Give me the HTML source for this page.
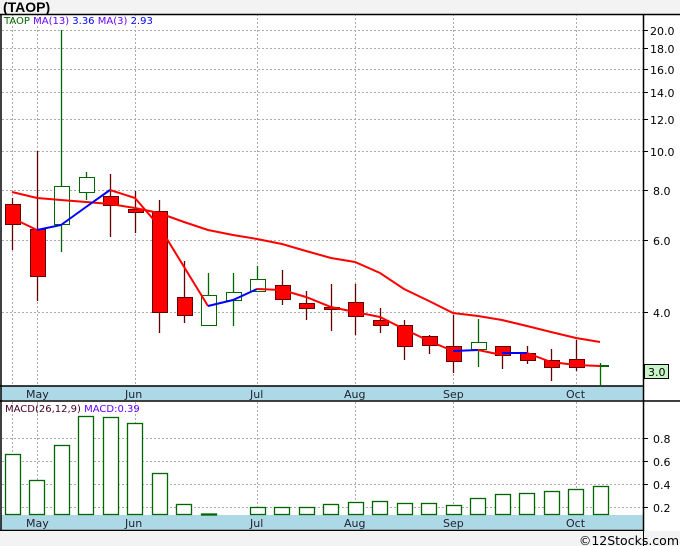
<!DOCTYPE html><html><head><style>
body{margin:0;background:#f3f3f3;width:680px;height:546px;overflow:hidden}
svg{display:block;font-family:"DejaVu Sans","Liberation Sans",sans-serif}
</style></head><body>
<svg width="680" height="546" viewBox="0 0 680 546">
<rect x="0" y="0" width="680" height="546" fill="#f3f3f3"/>
<text x="3" y="12" font-size="14" font-weight="bold" font-family="Liberation Sans,sans-serif">(TAOP)</text>
<rect x="0" y="14" width="680" height="517" fill="#fff"/>
<g stroke="#aaa" stroke-dasharray="2,2" stroke-width="1">
<line x1="2" y1="30.5" x2="643" y2="30.5"/><line x1="2" y1="48.5" x2="643" y2="48.5"/><line x1="2" y1="69.5" x2="643" y2="69.5"/><line x1="2" y1="92.5" x2="643" y2="92.5"/><line x1="2" y1="119.5" x2="643" y2="119.5"/><line x1="2" y1="151.5" x2="643" y2="151.5"/><line x1="2" y1="190.5" x2="643" y2="190.5"/><line x1="2" y1="240.5" x2="643" y2="240.5"/><line x1="2" y1="312.5" x2="643" y2="312.5"/>
<line x1="2" y1="438.5" x2="643" y2="438.5"/><line x1="2" y1="461.5" x2="643" y2="461.5"/><line x1="2" y1="484.5" x2="643" y2="484.5"/><line x1="2" y1="507.5" x2="643" y2="507.5"/>
<line x1="12.5" y1="14" x2="12.5" y2="530"/><line x1="37.5" y1="14" x2="37.5" y2="530"/><line x1="135.5" y1="14" x2="135.5" y2="530"/><line x1="257.5" y1="14" x2="257.5" y2="530"/><line x1="355.5" y1="14" x2="355.5" y2="530"/><line x1="453.5" y1="14" x2="453.5" y2="530"/><line x1="576.5" y1="14" x2="576.5" y2="530"/>
</g>
<rect x="1" y="386" width="642" height="14" fill="#add8e6"/>
<rect x="1" y="515" width="642" height="15" fill="#add8e6"/>
<g font-size="11" fill="#223">
<text x="26" y="398">May</text><text x="125" y="398">Jun</text><text x="250" y="398">Jul</text><text x="344" y="398">Aug</text><text x="443" y="398">Sep</text><text x="566" y="398">Oct</text>
<text x="26" y="527">May</text><text x="125" y="527">Jun</text><text x="250" y="527">Jul</text><text x="344" y="527">Aug</text><text x="443" y="527">Sep</text><text x="566" y="527">Oct</text>
</g>
<g stroke="#000" stroke-width="1.5" fill="none">
<line x1="0" y1="14.5" x2="680" y2="14.5"/><line x1="1" y1="14" x2="1" y2="531"/><line x1="643.5" y1="14" x2="643.5" y2="546"/>
<line x1="0" y1="401" x2="680" y2="401"/><line x1="0" y1="530.5" x2="643" y2="530.5"/><line x1="0" y1="386" x2="643" y2="386"/>
</g>
<g stroke="#000"><line x1="643" y1="30.5" x2="648" y2="30.5"/><line x1="643" y1="48.5" x2="648" y2="48.5"/><line x1="643" y1="69.5" x2="648" y2="69.5"/><line x1="643" y1="92.5" x2="648" y2="92.5"/><line x1="643" y1="119.5" x2="648" y2="119.5"/><line x1="643" y1="151.5" x2="648" y2="151.5"/><line x1="643" y1="190.5" x2="648" y2="190.5"/><line x1="643" y1="240.5" x2="648" y2="240.5"/><line x1="643" y1="312.5" x2="648" y2="312.5"/><line x1="643" y1="438.5" x2="648" y2="438.5"/><line x1="643" y1="461.5" x2="648" y2="461.5"/><line x1="643" y1="484.5" x2="648" y2="484.5"/><line x1="643" y1="507.5" x2="648" y2="507.5"/></g>
<g font-size="11" fill="#000">
<text x="650" y="35">20.0</text><text x="650" y="53">18.0</text><text x="650" y="74">16.0</text><text x="650" y="97">14.0</text><text x="650" y="124">12.0</text><text x="650" y="156">10.0</text><text x="653" y="195">8.0</text><text x="653" y="245">6.0</text><text x="653" y="317">4.0</text>
<text x="653" y="443">0.8</text><text x="653" y="466">0.6</text><text x="653" y="489">0.4</text><text x="653" y="512">0.2</text>
</g>
<rect x="644.5" y="364.5" width="24" height="14" fill="#c8f5c8" stroke="#000"/>
<text x="648" y="376" font-size="11">3.0</text>
<text x="4" y="24" font-size="10"><tspan fill="#060">TAOP</tspan> <tspan fill="#60f">MA(13)</tspan> <tspan fill="#00f">3.36</tspan> <tspan fill="#60f">MA(3)</tspan> <tspan fill="#00f">2.93</tspan></text>
<text x="5" y="412" font-size="10"><tspan fill="#402">MACD(26,12,9)</tspan>  <tspan fill="#60f">MACD:0.39</tspan></text>
<g stroke="#600" stroke-width="1.3">
<line x1="12.5" y1="198" x2="12.5" y2="250"/><line x1="37.5" y1="151" x2="37.5" y2="301"/><line x1="110.5" y1="174" x2="110.5" y2="237"/><line x1="135.5" y1="191" x2="135.5" y2="233"/><line x1="159.5" y1="200" x2="159.5" y2="333"/><line x1="184.5" y1="261" x2="184.5" y2="323"/><line x1="282.5" y1="270" x2="282.5" y2="305"/><line x1="306.5" y1="291" x2="306.5" y2="320"/><line x1="331.5" y1="284" x2="331.5" y2="331"/><line x1="355.5" y1="284" x2="355.5" y2="335"/><line x1="380.5" y1="308" x2="380.5" y2="333"/><line x1="404.5" y1="320" x2="404.5" y2="360"/><line x1="429.5" y1="335" x2="429.5" y2="354"/><line x1="453.5" y1="315" x2="453.5" y2="373"/><line x1="502.5" y1="346" x2="502.5" y2="369"/><line x1="527.5" y1="346" x2="527.5" y2="364"/><line x1="551.5" y1="349" x2="551.5" y2="381"/><line x1="576.5" y1="340" x2="576.5" y2="371"/>
</g>
<g stroke="#060" stroke-width="1.3">
<line x1="61.5" y1="30" x2="61.5" y2="252"/><line x1="86.5" y1="172" x2="86.5" y2="200"/><line x1="208.5" y1="273" x2="208.5" y2="325"/><line x1="233.5" y1="273" x2="233.5" y2="326"/><line x1="257.5" y1="266" x2="257.5" y2="291"/><line x1="478.5" y1="319" x2="478.5" y2="367"/><line x1="600.5" y1="363" x2="600.5" y2="387"/>
</g>
<g fill="#f00" stroke="#600">
<rect x="5.5" y="204.5" width="15" height="20"/><rect x="30.5" y="229.5" width="15" height="47"/><rect x="103.5" y="196.5" width="15" height="9"/><rect x="128.5" y="209.5" width="15" height="3"/><rect x="152.5" y="211.5" width="15" height="101"/><rect x="177.5" y="297.5" width="15" height="18"/><rect x="275.5" y="285.5" width="15" height="14"/><rect x="299.5" y="303.5" width="15" height="5"/><rect x="324.5" y="307.5" width="15" height="2"/><rect x="348.5" y="302.5" width="15" height="14"/><rect x="373.5" y="320.5" width="15" height="5"/><rect x="397.5" y="325.5" width="15" height="21"/><rect x="422.5" y="336.5" width="15" height="9"/><rect x="446.5" y="346.5" width="15" height="15"/><rect x="495.5" y="346.5" width="15" height="9"/><rect x="520.5" y="353.5" width="15" height="7"/><rect x="544.5" y="360.5" width="15" height="7"/><rect x="569.5" y="359.5" width="15" height="8"/>
</g>
<g fill="#fff" stroke="#060">
<rect x="54.5" y="186.5" width="15" height="38"/><rect x="79.5" y="177.5" width="15" height="15"/><rect x="201.5" y="295.5" width="15" height="30"/><rect x="226.5" y="292.5" width="15" height="8"/><rect x="250.5" y="279.5" width="15" height="12"/><rect x="471.5" y="342.5" width="15" height="7"/>
</g>
<polyline fill="none" stroke="#f00" stroke-width="2" points="12,192 37,198 61,200 86,202 110,204 135,208 159,213 184,222 208,230 233,235 257,239 282,244 306,251 331,258 355,262 380,273 404,289 429,301 453,313 478,316 502,320 527,326 551,332 576,338 600,342"/>
<polyline fill="none" stroke="#f00" stroke-width="2" points="12,218 37,230"/>
<polyline fill="none" stroke="#00f" stroke-width="2" points="37,230 61,225 86,207 110,190"/>
<polyline fill="none" stroke="#f00" stroke-width="2" points="110,190 135,198 159,226 208,306"/>
<polyline fill="none" stroke="#00f" stroke-width="2" points="208,306 233,300 257,289"/>
<polyline fill="none" stroke="#f00" stroke-width="2" points="257,289 282,290 306,297 331,307 355,312 380,317 404,329 429,341 453,351"/>
<polyline fill="none" stroke="#00f" stroke-width="2" points="453,351 478,350"/>
<polyline fill="none" stroke="#f00" stroke-width="2" points="478,350 502,355"/>
<polyline fill="none" stroke="#00f" stroke-width="2" points="502,353 527,353"/>
<polyline fill="none" stroke="#f00" stroke-width="2" points="527,353 551,362 576,365 600,366"/>
<line x1="600" y1="366" x2="609" y2="366" stroke="#060" stroke-width="2"/>
<g fill="#fff" stroke="#060" stroke-width="1.3">
<rect x="5.5" y="454.5" width="15" height="60"/><rect x="29.5" y="480.5" width="15" height="34"/><rect x="54.5" y="445.5" width="15" height="69"/><rect x="78.5" y="416.5" width="15" height="98"/><rect x="103.5" y="417.5" width="15" height="97"/><rect x="127.5" y="423.5" width="15" height="91"/><rect x="152.5" y="473.5" width="15" height="41"/><rect x="176.5" y="504.5" width="15" height="10"/><rect x="201.5" y="514" width="15" height="1"/><rect x="250.5" y="507.5" width="15" height="7"/><rect x="274.5" y="507.5" width="15" height="7"/><rect x="299.5" y="507.5" width="15" height="7"/><rect x="323.5" y="504.5" width="15" height="10"/><rect x="348.5" y="502.5" width="15" height="12"/><rect x="372.5" y="501.5" width="15" height="13"/><rect x="397.5" y="503.5" width="15" height="11"/><rect x="421.5" y="503.5" width="15" height="11"/><rect x="446.5" y="505.5" width="15" height="9"/><rect x="470.5" y="498.5" width="15" height="16"/><rect x="495.5" y="494.5" width="15" height="20"/><rect x="519.5" y="493.5" width="15" height="21"/><rect x="544.5" y="491.5" width="15" height="23"/><rect x="568.5" y="489.5" width="15" height="25"/><rect x="593.5" y="486.5" width="15" height="28"/>
</g>
<rect x="0" y="531" width="680" height="15" fill="#f3f3f3"/>
<line x1="643.5" y1="531" x2="643.5" y2="546" stroke="#000"/>
<text x="679" y="545" font-size="12.5" text-anchor="end" fill="#000">©12Stocks.com</text>
</svg>
</body></html>
